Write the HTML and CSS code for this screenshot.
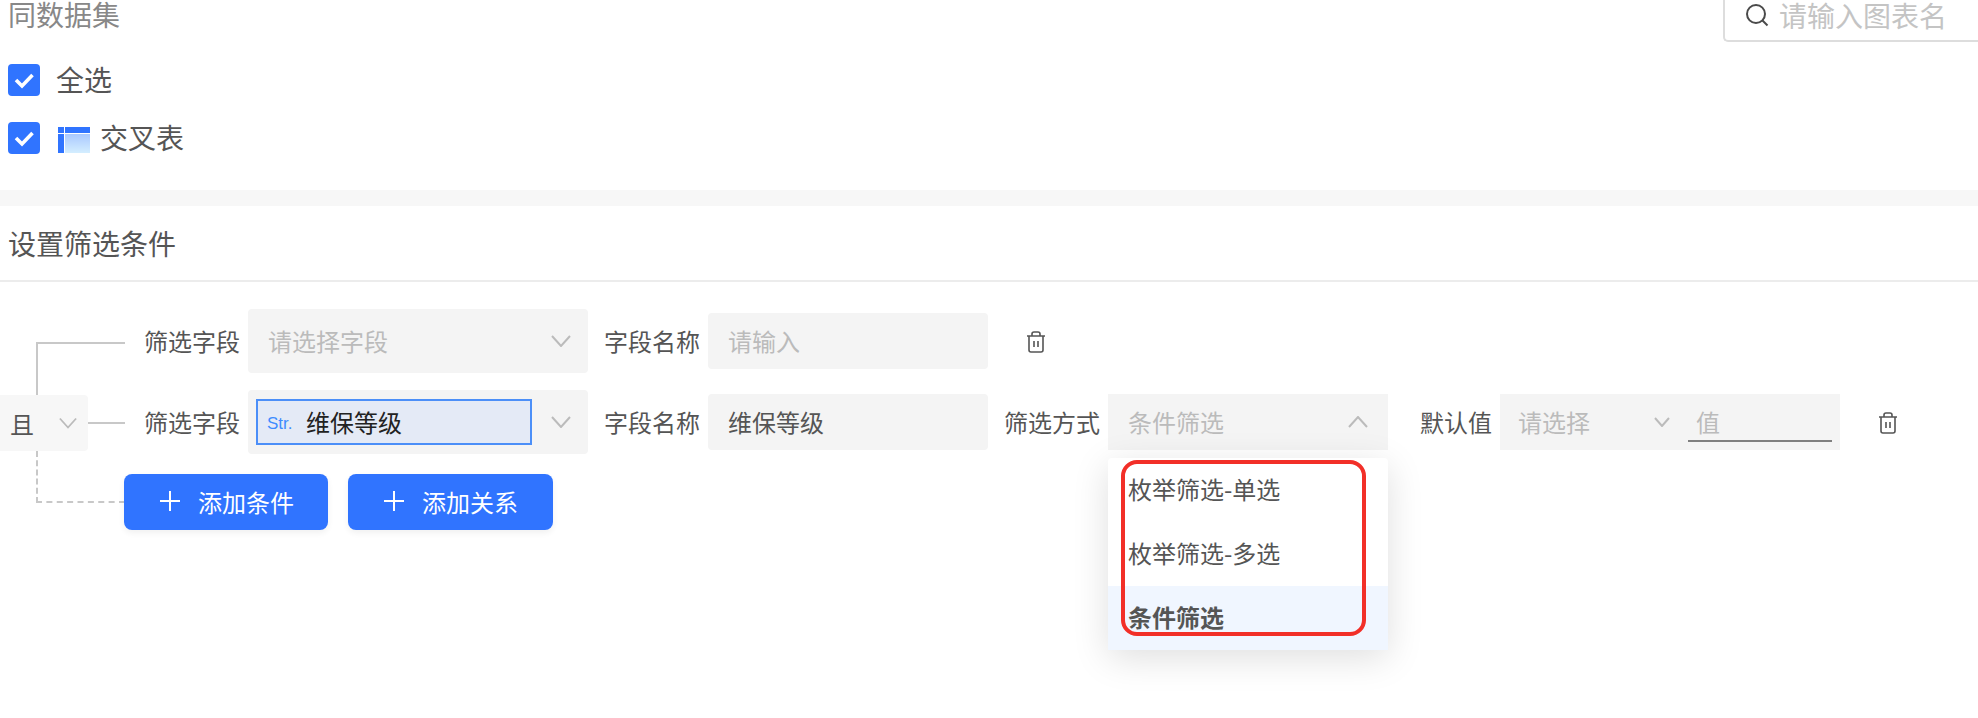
FILE: index.html
```html
<!DOCTYPE html>
<html>
<head>
	<meta charset="utf-8"/>
	<title>设置筛选条件</title>
	<link rel="stylesheet" href="styles.css">
</head>
<body>
<div class="head">
	<span class="head_title">同数据集</span>
	<div class="search">
		<svg class="search_icon" viewBox="0 0 24 24"><circle cx="11" cy="11" r="9"/><path d="M17.5 17.5l5 5"/></svg>
		<span>请输入图表名</span>
	</div>
</div>
<div class="checks">
	<div class="check_row">
		<span class="check"><svg viewBox="0 0 32 32"><path d="M8 16l6 6 10.5-11"/></svg></span>
		<span class="check_text">全选</span>
	</div>
	<div class="check_row">
		<span class="check"><svg viewBox="0 0 32 32"><path d="M8 16l6 6 10.5-11"/></svg></span>
		<svg class="table_icon" viewBox="0 0 32 26">
			<defs><linearGradient id="tblFill" x1="0" y1="0" x2="0" y2="1"><stop offset="0" stop-color="#a9c8ff"/><stop offset="1" stop-color="#d4eeff"/></linearGradient></defs>
			<rect x="0" y="0" width="6" height="6" fill="#3074ff"/>
			<rect x="7" y="0" width="25" height="6" fill="#3074ff"/>
			<rect x="0" y="7" width="6" height="19" fill="#3074ff"/>
			<rect x="7" y="7" width="25" height="19" fill="url(#tblFill)"/>
		</svg>
		<span class="check_text">交叉表</span>
	</div>
</div>
<div class="band"></div>
<div class="section_title">设置筛选条件</div>
<div class="tree">
	<div class="rel">
		<div class="rel_top"></div>
		<div class="rel_mid">
			<div class="rel_box">
				<span>且</span>
				<svg class="chev" viewBox="0 0 20 12"><path d="M1 1l9 10 9-10"/></svg>
			</div>
			<div class="rel_line"></div>
		</div>
		<div class="rel_bot"></div>
	</div>
	<div class="conds">
		<div class="row">
			<span class="label">筛选字段</span>
			<div class="select tall">
				<span class="ph sel_text">请选择字段</span>
				<svg class="chev" viewBox="0 0 20 12"><path d="M1 1l9 10 9-10"/></svg>
			</div>
			<span class="label gap_l">字段名称</span>
			<div class="select"><span class="ph">请输入</span></div>
			<svg class="trash" viewBox="0 0 20 22"><path d="M1 5h18M3 5v14a2 2 0 0 0 2 2h10a2 2 0 0 0 2-2V5M6 5V3a2 2 0 0 1 2-2h4a2 2 0 0 1 2 2v2M8 10v6M12 10v6"/></svg>
		</div>
		<div class="row">
			<span class="label">筛选字段</span>
			<div class="select tall">
				<div class="picked">
					<span class="str">Str.</span>
					<span>维保等级</span>
				</div>
				<svg class="chev" viewBox="0 0 20 12"><path d="M1 1l9 10 9-10"/></svg>
			</div>
			<span class="label gap_l">字段名称</span>
			<div class="select"><span>维保等级</span></div>
			<span class="label gap_l">筛选方式</span>
			<div class="select open">
				<span class="ph">条件筛选</span>
				<svg class="chev" viewBox="0 0 20 12"><path d="M1 11l9-10 9 10"/></svg>
				<div class="menu">
					<div class="menu_item">枚举筛选-单选</div>
					<div class="menu_item">枚举筛选-多选</div>
					<div class="menu_item on">条件筛选</div>
					<div class="mark"></div>
				</div>
			</div>
			<span class="label gap_d">默认值</span>
			<div class="select pair">
				<span class="ph">请选择</span>
				<svg class="chev small" viewBox="0 0 16 10"><path d="M1 1l7 8 7-8"/></svg>
				<span class="ph value">值</span>
			</div>
			<svg class="trash" viewBox="0 0 20 22"><path d="M1 5h18M3 5v14a2 2 0 0 0 2 2h10a2 2 0 0 0 2-2V5M6 5V3a2 2 0 0 1 2-2h4a2 2 0 0 1 2 2v2M8 10v6M12 10v6"/></svg>
		</div>
		<div class="btns">
			<div class="btn"><svg viewBox="0 0 20 20"><path d="M10 0v20M0 10h20"/></svg>添加条件</div>
			<div class="btn"><svg viewBox="0 0 20 20"><path d="M10 0v20M0 10h20"/></svg>添加关系</div>
		</div>
	</div>
</div>
</body>
</html>
```

FILE: styles.css
```css
/* =====public===== */
body { margin: 0; height: 718px; overflow: hidden; background: #fff; color: #555; font-size: 24px; font-family: "Noto Sans CJK SC", "Noto Sans", sans-serif; }
svg { display: block; fill: none; }

/* =====top===== */
.head { display: flex; justify-content: space-between; height: 42px; padding-left: 8px; }
.head_title { color: #888; font-size: 28px; line-height: 28px; height: 28px; }
.search { display: flex; align-items: center; width: 255px; height: 42px; box-sizing: border-box; border: 2px solid #ddd; border-top: 0; border-right: 0; border-radius: 0 0 0 5px; padding: 0 0 10px 20px; color: #c4c4c4; font-size: 28px; line-height: 30px; }
.search_icon { width: 24px; height: 24px; margin-right: 10px; stroke: #4a4a4a; stroke-width: 2; }

.checks { padding: 22px 0 0 8px; height: 126px; font-size: 28px; }
.check_row { display: flex; align-items: center; height: 32px; margin-bottom: 26px; }
.check { width: 32px; height: 32px; margin-right: 17px; background: #3074ff; border-radius: 4px; }
.check svg { stroke: #fff; stroke-width: 3.6; }
.check_text { margin: 0 0 3px -1px; }
.table_icon { width: 32px; height: 26px; margin: 4px 11px 0 1px; }

.band { height: 16px; background: #f7f7f7; }
.section_title { height: 74px; line-height: 74px; padding-left: 8px; font-size: 28px; border-bottom: 2px solid #ececec; }

/* =====tree===== */
.tree { display: flex; padding-top: 27px; }
.rel { width: 125px; flex: none; padding-top: 33px; }
.rel_top { width: 87px; height: 51px; margin-left: 36px; border-top: 2px solid #c8c8c8; border-left: 2px solid #c8c8c8; }
.rel_mid { display: flex; align-items: center; height: 56px; }
.rel_box { display: flex; align-items: center; justify-content: space-between; width: 88px; height: 56px; box-sizing: border-box; padding: 0 10px 0 10px; background: #f7f7f7; border-radius: 0 4px 4px 0; }
.rel_line { flex: 1; height: 2px; background: #c8c8c8; }
.rel_bot { width: 87px; height: 50px; margin-left: 36px; border-left: 2px dashed #c8c8c8; border-bottom: 2px dashed #c8c8c8; }

.conds { flex: 1; padding-left: 19px; }
.row { display: flex; align-items: center; height: 64px; margin-bottom: 17px; }
.label { width: 96px; margin-right: 8px; white-space: nowrap; line-height: 30px; }
.gap_l { margin-left: 16px; margin-right: 10px; width: 94px; }
.gap_d { margin-left: 32px; margin-right: 8px; width: 72px; }

.select { position: relative; display: flex; align-items: center; justify-content: space-between; width: 280px; height: 56px; box-sizing: border-box; padding: 0 20px; background: #f4f4f4; border-radius: 4px; line-height: 30px; white-space: nowrap; }
.tall { width: 340px; height: 64px; padding: 0 17px 0 20px; }
.ph { color: #bbb; }
.chev { width: 20px; height: 12px; stroke: #bbb; stroke-width: 2; }
.rel_box .chev { width: 18px; margin-right: 1px; }
.small { width: 16px; height: 10px; margin: 0 18px 0 64px; }

.picked { display: flex; align-items: center; width: 276px; height: 46px; box-sizing: border-box; margin-left: -12px; padding-left: 9px; background: #e4eaf6; border: 2px solid #4c8ff8; color: #222; }
.str { width: 39px; margin-top: 3px; color: #3f8cff; font-size: 17px; line-height: 20px; font-family: "Liberation Sans", sans-serif; }

.open { border-radius: 0; padding-right: 20px; }
.menu { position: absolute; left: 0; top: 64px; width: 280px; background: #fff; border-radius: 4px; box-shadow: 0 8px 36px rgba(0, 0, 0, 0.13); z-index: 2; }
.menu_item { height: 64px; line-height: 62px; padding-left: 20px; color: #555; }
.menu_item.on { background: #f0f6ff; font-weight: bold; }
.mark { position: absolute; left: 13px; top: 2px; width: 245px; height: 176px; box-sizing: border-box; border: 4px solid #f22f28; border-radius: 16px; }

.pair { width: 340px; padding: 0 8px 0 18px; justify-content: flex-start; border-radius: 0; }
.value { flex: 1; height: 38px; line-height: 36px; padding-left: 8px; margin-top: 2px; box-sizing: border-box; border-bottom: 2px solid #808080; }

.trash { width: 20px; height: 22px; margin: 2px 0 0 38px; stroke: #555; stroke-width: 1.6; }

.btns { display: flex; gap: 20px; margin: 20px 0 0 -20px; }
.btn { display: flex; align-items: center; width: 204px; height: 56px; box-sizing: border-box; padding-left: 36px; padding-bottom: 2px; background: #3074ff; border-radius: 8px; color: #fff; box-shadow: 0 3px 6px rgba(0, 0, 0, 0.06); }
.btn + .btn { width: 205px; }
.btn svg { width: 20px; height: 20px; margin-right: 18px; stroke: #fff; stroke-width: 2; }
```
